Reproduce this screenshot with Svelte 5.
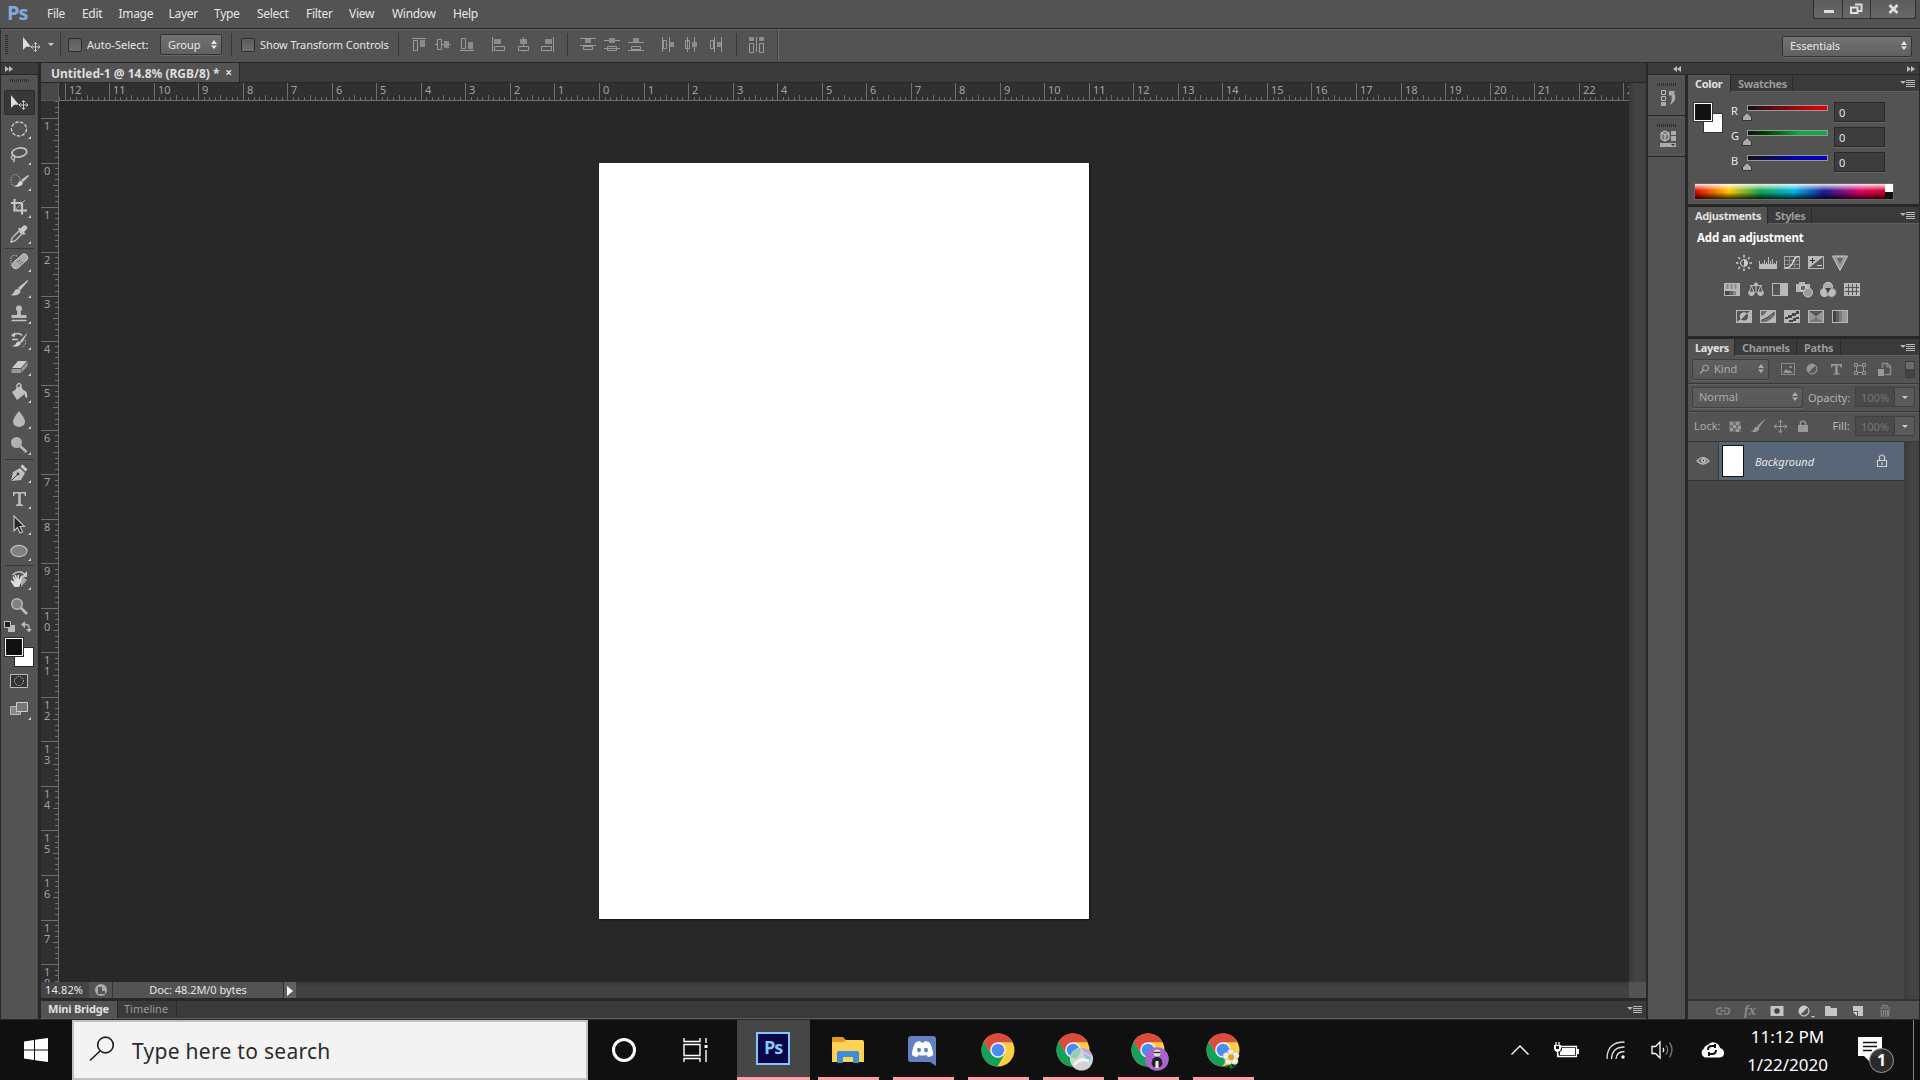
<script lang="ts">
  interface MenuItem {
    label: string;
    width: number;
  }

  const menus: MenuItem[] = [
    { label: "File", width: 35 },
    { label: "Edit", width: 36.5 },
    { label: "Image", width: 50 },
    { label: "Layer", width: 45.500 },
    { label: "Type", width: 43 },
    { label: "Select", width: 49 },
    { label: "Filter", width: 43 },
    { label: "View", width: 43 },
    { label: "Window", width: 61 },
    { label: "Help", width: 40 },
  ];

  const alignGroups = [
    ["alignTop", "alignMiddle", "alignBottom"],
    ["alignLeft", "alignCenter", "alignRight"],
  ];
  const distributeGroups = [
    ["distTop", "distMiddle", "distBottom"],
    ["distLeft", "distCenter", "distRight"],
  ];

  const toolGroups = [
    ["move", "marquee", "lasso", "quickSelect", "crop", "eyedropper"],
    ["healing", "brush", "stamp", "history", "eraser", "bucket", "blur", "dodge"],
    ["pen", "type", "path", "ellipse"],
    ["hand", "zoom"],
  ];

  const sliders = [
    { name: "R", value: 0 },
    { name: "G", value: 0 },
    { name: "B", value: 0 },
  ];

  const adjustments = [
    ["brightness", "levels", "curves", "exposure", "vibrance"],
    ["hue", "balance", "bw", "photo", "mixer", "lookup"],
    ["invert", "posterize", "threshold", "selective", "gradmap"],
  ];

  // inches to screen pixels at the current zoom
  const unit = 44.53;
  const hOrigin = 540.5;
  const vOrigin = 62;

  function ticks(origin: number, length: number) {
    const list: { pos: number; kind: number; label: number }[] = [];
    for (let i = -100; i < 200; i++) {
      const pos = Math.floor(origin + (i * unit) / 8) + 0.5;
      if (pos < 0 || pos > length) continue;
      const kind = i % 8 === 0 ? 2 : i % 4 === 0 ? 1 : 0;
      list.push({ pos, kind, label: Math.abs(i / 8) });
    }
    return list;
  }

  const hTicks = ticks(hOrigin, 1570);
  const vTicks = ticks(vOrigin, 881);

  const chrome =
    '<circle cx="17" cy="17" r="16.5" fill="#ffcd40"/><path d="M31.5 9.2A16.5 16.5 0 0 0 2.7 8.7L10.2 21L17 9.2Z" fill="#dd4b3e"/><path d="M2.7 8.7A16.5 16.5 0 0 0 16.5 33.5L23.8 21L10.2 21Z" fill="#12a05a"/><circle cx="17" cy="17" r="7.8" fill="#f5f5f5"/><circle cx="17" cy="17" r="6.3" fill="#4c8bf5"/>';

  const apps = [
    {
      name: "explorer",
      art: '<path d="M1 5q0-1 1-1h10l3 3h16q1 0 1 1v21H1Z" fill="#e09a1c"/><path d="M1 9h12l2-2h16q2 0 2 2v20H1Z" fill="#ffd157"/><path d="M6 30V20q0-2 2-2h18q2 0 2 2v10h-6v-6H12v6Z" fill="#3a8fd8"/>',
    },
    {
      name: "discord",
      art: '<path d="M5 3h22q3 0 3 3v27l-6-4H5q-3 0-3-3V6q0-3 3-3Z" fill="#6480c0"/><path d="M9.500 9.500q2.500-1.500 4.500-1.500l1 1.500h3L19 8q2 0 4.500 1.500Q27 15 27 22q-2 2-5 2l-1.500-2q-4 1-8 0L11 24q-3 0-5-2 0-7 3.500-12.500Z" fill="#fff"/><ellipse cx="13" cy="17" rx="2" ry="2.300" fill="#6480c0"/><ellipse cx="20" cy="17" rx="2" ry="2.300" fill="#6480c0"/>',
    },
    { name: "chrome", art: chrome },
    {
      name: "chrome-globe",
      art:
        chrome +
        '<circle cx="25.500" cy="26" r="11.500" fill="#d4d4d4"/><path d="M15 24q2-8 9-9l1 4-5 7Z" fill="#8fd0b8"/><path d="M25 15q9-1 11 8l-8-4Z" fill="#c9a0dd"/><path d="M27 20l8 4-1 5-5-4Z" fill="#8bc4dd"/><path d="M18 32q6-8 15-4" stroke="#f2f2f2" stroke-width="3" fill="none"/>',
    },
    {
      name: "chrome-person",
      art:
        chrome +
        '<circle cx="26" cy="26" r="11.800" fill="#aa63cf"/><path d="M20.500 31l1-5 3-2h3l3 2 1 5-2 3h-2v-4h-3v4h-2Z" fill="#222"/><circle cx="26" cy="20" r="3.600" fill="#ddd"/><path d="M22.500 19.500h7" stroke="#333" stroke-width="1.300"/><path d="M24.500 28h3v7h-3Z" fill="#e5e5e5"/>',
    },
    {
      name: "chrome-flower",
      art:
        chrome +
        '<path d="M19 34l4-2 2 3 5-3M25 28v7" stroke="#15741f" stroke-width="2" fill="none" stroke-dasharray="3 1"/><g fill="#f3eee4" stroke="#b9a88a" stroke-width=".5"><circle cx="25" cy="19.500" r="3.600"/><circle cx="29.500" cy="22.500" r="3.600"/><circle cx="28.500" cy="28" r="3.600"/><circle cx="22.500" cy="28" r="3.600"/><circle cx="20.500" cy="23" r="3.600"/></g><circle cx="25" cy="24.300" r="3" fill="#e0a326"/>',
    },
  ];

  const solid = (d: string) => `<path d="${d}" fill="#8b8b8b"/>`;
  const line = (d: string) => `<path d="${d}" fill="none" stroke="#9a9a9a"/>`;
  const frame = '<rect x="0" y="1" width="16" height="13" fill="#b8b8b8"/>';

  const icons: Record<string, string> = {
    alignTop: line("M1 2.5h14M2.5 4.5h4v10h-4z") + solid("M9 4h5v7h-5z"),
    alignMiddle: line("M0 8.5h3M7 8.5h9M2.5 3.5h4v10h-4z") + solid("M9 5h5v7h-5z"),
    alignBottom: line("M1 14.5h14M2.5 2.5h4v10h-4z") + solid("M9 6h5v7h-5z"),
    alignLeft: line("M1.5 1v15M3.5 10.5h10v4h-10z") + solid("M3 3h7v5h-7z"),
    alignCenter: line("M8.5 1v2M8.5 7v3M8.5 14v2M3.5 10.5h10v4h-10z") + solid("M5 3h7v5h-7z"),
    alignRight: line("M14.5 1v15M2.5 10.5h10v4h-10z") + solid("M6 3h7v5h-7z"),
    distTop: line("M0 2.5h16M0 9.5h16M3.5 10.5h9v3h-9z") + solid("M5 3h6v4h-6z"),
    distMiddle: line("M0 4.5h16M0 12.5h16M3.5 10.5h9v4h-9z") + solid("M5 2h6v5h-6z"),
    distBottom: line("M0 6.5h16M0 14.5h16M3.5 10.5h9v3h-9z") + solid("M5 2h6v4h-6z"),
    distLeft: line("M2.5 1v15M9.5 1v15M3.5 4.5h3v8h-3z") + solid("M10 6h4v5h-4z"),
    distCenter: line("M3.5 1v15M10.5 1v15M1.5 4.5h4v8h-4z") + solid("M8 6h5v5h-5z"),
    distRight: line("M6.5 1v15M13.5 1v15M2.5 4.5h3v8h-3z") + solid("M9 6h4v5h-4z"),
    autoAlign: line("M1.5 7.5h4v9h-4zM8.5 1v15M11.5 7.5h4v9h-4z") + solid("M1 1h5v4h-5zM11 1h5v4h-5z"),

    move: '<path d="M2 2v13l3.200-3.200H10Z" fill="#ddd"/><path d="M14.500 7.500v9M10 12h9M12.800 9.200l1.700-1.700 1.700 1.700M12.800 14.800l1.700 1.700 1.700-1.700M11.700 10.300L10 12l1.700 1.700M17.300 10.300L19 12l-1.700 1.700" stroke="#c8c8c8" fill="none"/>',
    marquee: '<ellipse cx="10" cy="10" rx="7.500" ry="7" fill="none" stroke="#d0d0d0" stroke-width="1.300" stroke-dasharray="3.600 1.400"/>',
    lasso: '<ellipse cx="10.500" cy="7.500" rx="7.500" ry="4.500" transform="rotate(-10 10 8)" fill="none" stroke="#c4c4c4" stroke-width="1.700"/><path d="M4 10q-3 2-1 4 3 1 3-2t-3-1M5 14q1 2-1 3" fill="none" stroke="#c4c4c4" stroke-width="1.200"/>',
    quickSelect: '<ellipse cx="6.500" cy="9.500" rx="4.500" ry="6" fill="none" stroke="#d0d0d0" stroke-dasharray="1 1.300"/><path d="M19 4l-7 5 2 2 6-6Z" fill="#c8c8c8"/><path d="M12 10q3 1 1 4-4 3-8 1 4-1 4-3 1-2 3-2Z" fill="#d8d8d8"/>',
    crop: '<path d="M5.500 2v11.500H18M2 6h11v11.500" fill="none" stroke="#c6c6c6" stroke-width="2.200"/><path d="M6 13L16 3" stroke="#aaa"/>',
    eyedropper: '<path d="M2 18l1-4 7-7 3 3-7 7Z" fill="#555" stroke="#c8c8c8" stroke-width="1.300"/><path d="M9 5l6 6 1.500-1.500-1.500-1.500 3-3q1-2-1-3.500-2-1-3.500 1l-2 2-1-1Z" fill="#c8c8c8"/>',
    healing: '<path d="M8 4q-6-2-6 3v6q1 4 5 2" fill="none" stroke="#ddd" stroke-dasharray="1 1.300"/><rect x="2.500" y="6" width="18" height="7" rx="3.500" transform="rotate(-42 11 10)" fill="#aaa" stroke="#c5c5c5"/><path d="M8 9l5 4M10 8l4 3" stroke="#444" stroke-dasharray="1 1"/>',
    brush: '<path d="M18.500 2L9 10l2.300 2.300L19 3Z" fill="#c8c8c8"/><path d="M8.500 11q3 0 3 3-3 5-10 3 3-1 3.500-3 1-3 3.500-3Z" fill="#c4c4c4"/>',
    stamp: '<circle cx="10" cy="4.500" r="3" fill="#bdbdbd"/><path d="M8.500 6h3l.5 5h5.500v3h-15v-3H8Z" fill="#bdbdbd"/><path d="M2.500 16.500h15" stroke="#c5c5c5" stroke-width="1.500"/>',
    history: '<path d="M18 3l-7 8 2 2 5-9Z" fill="#c4c4c4"/><path d="M10 11q3 1 1 4-4 3-8 1 4-1 4-3Z" fill="#d0d0d0"/><path d="M3 5.500q7-4 10 0M3 9.500h6" fill="none" stroke="#c8c8c8" stroke-width="1.600"/><path d="M2 6l4-4v5Z" fill="#c8c8c8"/><path d="M16 10q2 6-4 7" fill="none" stroke="#ddd" stroke-dasharray="1 1.300"/>',
    eraser: '<path d="M9 5h9l-6 7H3Z" fill="#ccc"/><path d="M2.500 13H12v4H2.500ZM12.500 12.500L18.500 6v4l-6 6.500Z" fill="#999"/>',
    bucket: '<path d="M3 10l8-6 6 7-9 7Z" fill="#bfbfbf"/><path d="M8 7V3q2-3 4 0v5" fill="none" stroke="#ccc" stroke-width="1.300"/><path d="M14 8q5 1 4 8-3-1-2-5Z" fill="#ccc"/>',
    blur: '<path d="M10 2q6 7 6 11a6 5 0 0 1-12 0Q4 9 10 2Z" fill="#b8b8b8"/>',
    dodge: '<circle cx="7.500" cy="7.500" r="5.500" fill="#b0b0b0"/><path d="M11 11l6.500 6" stroke="#b8b8b8" stroke-width="2.500"/>',
    pen: '<path d="M2 18l2-9 7-4 5 5-4 7Z" fill="#c0c0c0"/><path d="M2.500 17.500l6-6" stroke="#444"/><circle cx="9" cy="11" r="1.400" fill="#444"/><path d="M11.500 3.500l2-2 5 5-2 2Z" fill="#cfcfcf"/>',
    type: '<path d="M4 3h13v4h-1.200L15 4.600h-3.200V15l2.200.7V17H7v-1.300l2.200-.7V4.600H6L5.200 7H4Z" fill="#bdbdbd"/>',
    path: '<path d="M5 1v15l3.500-3.500L11 18l2.600-1.200L11 11.500h4.500Z" fill="#252525" stroke="#c8c8c8" stroke-width="1.100"/>',
    ellipse: '<ellipse cx="10" cy="10" rx="8" ry="5.700" fill="#808080" stroke="#bfbfbf" stroke-width="1.200"/>',
    hand: '<path d="M12 6l6 5-6 7Z" fill="#a8a8a8"/><path d="M3.500 6q6-6 12-1" fill="none" stroke="#c8c8c8" stroke-width="1.600"/><path d="M18 2v6h-6Z" fill="#c8c8c8"/><path d="M5.500 18l-4-6 1-1 3 2-2-5 1-1 2 4-1-5H7l1.500 4V6H10v5l2-4 1 .5-1 6-2 4.500Z" fill="#ddd"/>',
    zoom: '<circle cx="8" cy="8" r="5.300" fill="#808080" stroke="#b5b5b5" stroke-width="1.500"/><path d="M12 12l6 6" stroke="#bbb" stroke-width="2.800"/>',

    brightness: '<circle cx="8" cy="8" r="3.500" fill="#555" stroke="#ccc"/><path d="M8 4.500a3.500 3.500 0 0 1 0 7Z" fill="#ccc"/><path d="M8 0v2.500M8 13.500V16M0 8h2.500M13.500 8H16M2.300 2.300L4 4M12 12l1.700 1.700M13.700 2.300L12 4M4 12l-1.700 1.700" stroke="#ccc" stroke-width="1.600"/>',
    levels: '<path d="M-1 9h18v5H-1Z" fill="#bdbdbd"/><path d="M-.5 6v4M2.500 8v2M4.500 5v5M6.500 7v3M8.500 2v8M10.500 6v4M12.500 4v6M14.500 8v2M16.500 6v4" stroke="#bdbdbd"/>',
    curves: '<rect x=".500" y="1.500" width="15" height="12" fill="#555" stroke="#aaa"/><path d="M5.500 2v12M10.500 2v12M1 5.500h14M1 9.500h14" stroke="#888"/><path d="M1 13q6 0 8-6t6-5" fill="none" stroke="#ddd" stroke-width="1.300"/>',
    exposure: frame + '<path d="M1 13L15 2v11Z" fill="#555"/><path d="M2 5.500h5M4.500 3v5" stroke="#333"/><path d="M9 10.500h5" stroke="#ccc"/>',
    vibrance: '<path d="M.5 1h15L8 15.500Z" fill="#999" stroke="#c8c8c8"/><path d="M5 3h6l-3 6Z" fill="#666"/>',
    hue: frame + '<path d="M3.500 2v5M7.500 2v5M11.500 2v5" stroke="#888" stroke-width="2"/><path d="M1 9h4v4H1Z" fill="#444"/><path d="M5 9h4v4H5Z" fill="#606060"/><path d="M9 9h3v4H9Z" fill="#868686"/>',
    balance: '<path d="M2 3.500h12M8 1v10M3.500 4L1 10h5L3.500 4M12.500 4L10 10h5Z" fill="none" stroke="#bbb"/><path d="M0 10h7q-.5 4-3.500 4T0 10M9 10h7q-.5 4-3.500 4T9 10" fill="#bbb"/><circle cx="8" cy="2.500" r="2" fill="#bbb"/>',
    bw: frame + '<path d="M1 2h7v11H1Z" fill="#555"/>',
    photo: '<path d="M0 2h3V0h6v2h5v8H0Z" fill="#b5b5b5"/><circle cx="7" cy="6" r="3" fill="#666" stroke="#ddd"/><circle cx="12" cy="10.500" r="4.500" fill="#999" stroke="#ccc"/>',
    mixer: '<circle cx="8" cy="4.800" r="4.500" fill="#aaa" stroke="#ccc"/><circle cx="4.500" cy="10.500" r="4.500" fill="#bdbdbd"/><circle cx="11.500" cy="10.500" r="4.500" fill="#bdbdbd" stroke="#888"/><path d="M5 6h6l-3 5Z" fill="#444"/>',
    lookup: frame + '<path d="M4.500 2v11M8.500 2v11M12.500 2v11M1 5.500h14M1 9.500h14" stroke="#555"/>',
    invert: frame + '<path d="M1 2h13L1 13Z" fill="#555"/><circle cx="8" cy="7.500" r="4" fill="#555"/><path d="M11 4.500L5 10.500a4 4 0 0 1 6-6" fill="#bbb"/>',
    posterize: frame + '<path d="M1 2h6q-2 4-6 5ZM1 12q7-3 14-9v3Q10 12 5 13H1Z" fill="#6c6c6c"/><path d="M1 11.500Q8 9 14.500 3" stroke="#444" fill="none"/>',
    threshold: frame + '<path d="M1 8h3V6h4V4h4V2h3v3h-3v2H8v2H4v1H1ZM5 13v-2h4V9h3V8h3v2h-3v2H9v1Z" fill="#444"/>',
    selective: frame + '<path d="M1 2l7 5.500L1 13ZM15 2L8 7.500l7 5.500Z" fill="#999"/><path d="M1 13l7-5.500 7 5.500Z" fill="#777"/><path d="M1 2l7 5.500L15 2" fill="#555"/>',
    gradmap: frame + '<path d="M1 2h3v11H1Z" fill="#444"/><path d="M4 2h3v11H4Z" fill="#606060"/><path d="M7 2h3v11H7Z" fill="#7d7d7d"/><path d="M10 2h5v11h-5Z" fill="#989898"/>',

    image: '<rect x="1.500" y="2.500" width="13" height="11" fill="none" stroke="#888"/><path d="M3 12l3-4 2 2 1-1 4 3Z" fill="#999"/><path d="M9 5h3v2H9Z" fill="#888"/>',
    adjust: '<circle cx="8" cy="8" r="5" fill="#969696"/><path d="M11.500 4.500a5 5 0 0 1-7 7Z" fill="#555"/><circle cx="8" cy="8" r="5" fill="none" stroke="#999"/>',
    newAdjust: '<circle cx="8" cy="8" r="5" fill="#ccc"/><path d="M11.500 4.500a5 5 0 0 1-7 7Z" fill="#555"/><circle cx="8" cy="8" r="5" fill="none" stroke="#ccc"/><path d="M15 13h4l-2 2Z" fill="#ccc"/>',
    text: '<path d="M3 3h11v3.500h-1L12 4.500H9.700V12l1.800.5v1H5.500v-1l1.800-.5V4.500H5L4 6.500H3Z" fill="#999"/>',
    shape: '<path d="M4 4.500h8M4 11.500h8M4.500 4v8M11.500 4v8" stroke="#999" fill="none"/><path d="M2.500 2.500h3v3h-3ZM10.500 2.500h3v3h-3ZM2.500 10.500h3v3h-3ZM10.500 10.500h3v3h-3Z" fill="#555" stroke="#999"/>',
    smart: '<path d="M6.500 7V2.500h5l3 3v8H9" fill="none" stroke="#888" stroke-width="1.500"/><path d="M2 8h6v7H2Z" fill="#999"/><path d="M11 2v4h4" stroke="#999" fill="none"/>',
    pixels: '<path d="M2 3h12v11H2Z" fill="#6f6f6f"/><path d="M3 4h3v3H3ZM9 4h3v3H9ZM6 7h3v3H6ZM3 10h3v3H3ZM11 8h3v3h-3ZM9 11h3v3H9Z" fill="#999"/>',
    moveLock: '<path d="M8.500 2v12M2 8.500h13M6.500 4.500l2-2.500 2 2.500M6.500 12.500l2 2.500 2-2.500M4.500 6.500L2 8.500l2.500 2M12.500 6.500l2.500 2-2.500 2" stroke="#999" fill="none"/>',
    lock: '<path d="M3 7h10v7H3Z" fill="#999"/><path d="M5.500 7V4.500q2.500-3 5 0V7" stroke="#999" stroke-width="1.500" fill="none"/>',
    layerLock: '<path d="M3.500 7.500h9v6h-9ZM5.500 7V3.500q2.500-3 5 0V7M8 9v3" stroke="#d0d0d0" stroke-width="1.200" fill="none"/>',
    eye: '<path d="M2 8q6-7 12 0-6 6-12 0Z" fill="#666" stroke="#bbb" stroke-width="1.200"/><circle cx="8.500" cy="7.500" r="2.300" fill="#ddd"/><circle cx="8.500" cy="7.500" r="1" fill="#333"/>',
    link: '<path d="M7 5H4.500a3 3 0 0 0 0 6H7M9 5h2.500a3 3 0 0 1 0 6H9M5 8h6" stroke="#999" stroke-width="1.500" fill="none"/>',
    mask: '<path d="M1.500 3h13v10h-13Z" fill="#c5c5c5"/><circle cx="8" cy="8" r="2.800" fill="#444"/>',
    folder: '<path d="M2 3h5l1 2h6v8H2Z" fill="#c5c5c5"/>',
    newLayer: '<path d="M3 3h10v10H8V8H3Z" fill="#c5c5c5"/><path d="M3 9l4 4V9Z" fill="#ddd"/>',
    trash: '<path d="M2.500 5h11M6 4V2.500h4V4M4 6.500l.5 6.500h7l.5-6.500M6.500 7v5M8.500 7v5M10.500 7v5" stroke="#888" stroke-width="1.200" fill="none"/>',
  };
</script>

{#snippet icon(name: string, size = 16)}
  <svg class="icon" width={size} height={size} viewBox={`0 0 ${size} ${size}`}>
    {@html icons[name]}
  </svg>
{/snippet}

{#snippet updown()}
  <svg class="icon" width="6" height="9" viewBox="0 0 6 9">
    <path d="M0 4L3 0L6 4ZM0 5.500L3 9L6 5.500Z" fill="currentColor" />
  </svg>
{/snippet}

{#snippet panelMenu()}
  <svg class="icon panel-menu" width="15" height="9" viewBox="0 0 15 9">
    <path d="M0 2h6L3 5Z" fill="#b5b5b5" />
    <path d="M6 1.500h9M6 3.500h9M6 5.500h9M6 7.500h9" stroke="#bbb" />
  </svg>
{/snippet}

{#snippet arrows(left: boolean)}
  <svg class="icon" class:flip={left} width="8" height="6" viewBox="0 0 8 6">
    <path d="M0 0L4 3L0 6ZM4 0L8 3L4 6Z" fill="#bbb" />
  </svg>
{/snippet}

<div class="screen">
  <header class="menubar">
    <span class="logo">Ps</span>
    <nav>
      {#each menus as menu}
        <span style:width="{menu.width}px">{menu.label}</span>
      {/each}
    </nav>
    <div class="window-buttons">
      <span><svg width="28" height="18"><path d="M10 10h10v3H10Z" fill="#ddd" /></svg></span>
      <span>
        <svg width="27" height="18"><path d="M12 4.500h6.500V11H15M8 7.500h6.500V13H8Z" fill="none" stroke="#ddd" stroke-width="2" /></svg>
      </span>
      <span>
        <svg width="46" height="18"><path d="M18.500 5l8 8M26.500 5l-8 8" stroke="#ddd" stroke-width="2.700" /></svg>
      </span>
    </div>
  </header>

  <div class="options">
    <i class="vgrip"></i>
    <div class="current-tool">{@render icon("move", 20)}<b class="caret"></b></div>
    <i class="vsep"></i>
    <label class="check auto"><i></i>Auto-Select:</label>
    <div class="select group">Group{@render updown()}</div>
    <i class="vsep"></i>
    <label class="check transform"><i></i>Show Transform Controls</label>
    <i class="vsep"></i>
    {#each alignGroups as group}
      <div class="align">{#each group as name}<span>{@render icon(name, 17)}</span>{/each}</div>
    {/each}
    <i class="vsep"></i>
    {#each distributeGroups as group}
      <div class="align">{#each group as name}<span>{@render icon(name, 17)}</span>{/each}</div>
    {/each}
    <i class="vsep"></i>
    <div class="align single"><span>{@render icon("autoAlign", 17)}</span></div>
    <i class="vsep tall"></i>
    <div class="select essentials">Essentials{@render updown()}</div>
  </div>

  <main class="workspace">
    <aside class="toolbar">
      <div class="collapse">{@render arrows(false)}</div>
      <div class="tools">
        <i class="hgrip"></i>
        {#each toolGroups as group, g}
          {#if g > 0}<hr />{/if}
          {#each group as tool}
            <div class="tool" class:active={tool === "move"}>
              {@render icon(tool, 20)}
              {#if tool !== "move" && tool !== "zoom"}<i class="corner"></i>{/if}
            </div>
          {/each}
        {/each}
        <div class="swap">
          <svg width="12" height="12"><path d="M4 4h7v7H4Z" fill="#bbb" /><path d="M.5.5h6v6h-6Z" fill="#222" stroke="#bbb" /></svg>
          <svg width="12" height="12"><path d="M2 3.500h3q3 0 3 3V9" fill="none" stroke="#bbb" stroke-width="1.300" /><path d="M4 0v7L0 3.500ZM5 8h6l-3 3.500Z" fill="#bbb" /></svg>
        </div>
        <div class="swatches"><i class="back"></i><i class="front"></i></div>
        <div class="mode">
          <svg width="18" height="14"><path d="M.5.5h17v13H.5Z" fill="#333" stroke="#bbb" /><circle cx="9" cy="7" r="4.500" fill="none" stroke="#ddd" stroke-dasharray="1 1.200" /></svg>
        </div>
        <div class="mode screenmode">
          <svg width="18" height="14"><path d="M.5 4.500h10v8H.5Z" fill="#888" stroke="#bbb" /><path d="M6.500.5h11v9h-11Z" fill="#777" stroke="#ccc" /></svg>
          <i class="corner"></i>
        </div>
      </div>
    </aside>

    <section class="document">
      <div class="doc-tabs"><div class="doc-tab">Untitled-1 @ 14.8% (RGB/8) * <span>×</span></div></div>
      <div class="viewport">
        <div class="ruler-corner"></div>
        <svg class="ruler hruler" width="1570" height="18">
          {#each hTicks as t}
            <path d={`M${t.pos} ${[14, 12, 0][t.kind]}V17`} />
            {#if t.kind === 2}<text x={t.pos + 3.5} y="11">{t.label}</text>{/if}
          {/each}
          <path d="M0 17.500H1570" />
        </svg>
        <svg class="ruler vruler" width="18" height="881">
          {#each vTicks as t}
            <path d={`M${[14, 12, 0][t.kind]} ${t.pos}H17`} />
            {#if t.kind === 2}
              {#each String(t.label) as digit, d}<text x="3" y={t.pos + 11.5 + d * 11}>{digit}</text>{/each}
            {/if}
          {/each}
          <path d="M17.500 0V881" />
        </svg>
        <div class="canvas"><div class="page"></div></div>
        <div class="vscroll"></div>
      </div>
      <div class="status">
        <span class="percent">14.82%</span>
        <span class="share"><svg width="14" height="14"><circle cx="7" cy="7" r="6" fill="#aaa" /><path d="M4 4v7h7V8H8V4Z" fill="#555" /></svg></span>
        <span class="doc-size">Doc: 48.2M/0 bytes</span>
        <span class="play"><svg width="7" height="10"><path d="M1 0v10l6-5Z" fill="#fff" /></svg></span>
        <i class="scroll-corner"></i>
      </div>
      <div class="bottom-tabs tabs"><span class="on bridge">Mini Bridge</span><span class="timeline">Timeline</span>{@render panelMenu()}</div>
    </section>

    <aside class="dock">
      <div class="collapse right">{@render arrows(true)}</div>
      <div class="dock-item">
        <i class="hgrip"></i>
        <svg width="16" height="18"><path d="M1.500 1.500h4v4h-4ZM1.500 7.500h4v4h-4Z" fill="none" stroke="#bbb" /><path d="M1 13h5v4H1Z" fill="#aaa" /><path d="M9 2h6l-1 2q4 7-4 12 3-7 1-10l-2 1Z" fill="#aaa" /></svg>
      </div>
      <div class="dock-item">
        <i class="hgrip"></i>
        <svg width="16" height="18"><path d="M5 1l4 2v6l-4 2-4-2V3Z" fill="#777" stroke="#ccc" /><path d="M1 3l4 2 4-2M5 5v6" fill="none" stroke="#ccc" /><path d="M11 1h5v4h-5ZM11 6h5v5h-5ZM0 13h16v4H0Z" fill="#aaa" /><path d="M11 14h4l-2 2Z" fill="#333" /></svg>
      </div>
      <div class="dock-rest"></div>
    </aside>

    <aside class="panels">
      <div class="collapse right">{@render arrows(false)}</div>
      <section class="panel color">
        <div class="tabs"><span class="on" style:width="43px">Color</span><span style:width="62px">Swatches</span>{@render panelMenu()}</div>
        <div class="color-body">
          <div class="color-chips"><i class="back"></i><i class="front"></i></div>
          <div class="sliders">
            {#each sliders as s}
              <div class="slider">
                <span>{s.name}</span>
                <div class="track"><i class={`bar ${s.name}`}></i><svg width="10" height="10"><path d="M5 .5L9.500 5v3.500h-9V5Z" fill="#aaa" stroke="#333" /></svg></div>
                <output>{s.value}</output>
              </div>
            {/each}
          </div>
        </div>
        <div class="spectrum"><i></i></div>
      </section>

      <section class="panel adjust">
        <div class="tabs"><span class="on" style:width="80px">Adjustments</span><span style:width="44px">Styles</span>{@render panelMenu()}</div>
        <h2>Add an adjustment</h2>
        {#each adjustments as row}
          <div class="adjust-row">{#each row as name}{@render icon(name, 16)}{/each}</div>
        {/each}
      </section>

      <section class="panel layers">
        <div class="tabs"><span class="on" style:width="47px">Layers</span><span style:width="62px">Channels</span><span style:width="44px">Paths</span>{@render panelMenu()}</div>
        <div class="filter-row">
          <div class="select kind">
            <svg width="11" height="10"><circle cx="6.500" cy="4" r="3" fill="none" stroke="#aaa" /><path d="M4.500 6L1 9.500" stroke="#aaa" stroke-width="1.300" /></svg>
            <span>Kind</span>{@render updown()}
          </div>
          <div class="filters">{#each ["image", "adjust", "text", "shape", "smart"] as name}{@render icon(name)}{/each}</div>
          <i class="toggle"></i>
        </div>
        <div class="blend-row">
          <div class="select blend">Normal{@render updown()}</div>
          <span class="field-label">Opacity:</span>
          <div class="percent-field"><span>100%</span><b><i class="caret"></i></b></div>
        </div>
        <div class="lock-row">
          <span class="lock-label">Lock:</span>
          <div class="locks">
            {@render icon("pixels")}
            <svg width="16" height="16" viewBox="0 0 20 20"><path d="M20 0L9 10l2.300 2.300ZM8.500 11q3 0 3 3-3 5-11 3 4-1 4.500-3 1-3 3.500-3Z" fill="#999" /></svg>
            {@render icon("moveLock")}
            {@render icon("lock")}
          </div>
          <span class="field-label">Fill:</span>
          <div class="percent-field"><span>100%</span><b><i class="caret"></i></b></div>
        </div>
        <div class="list">
          <div class="layer">
            <div class="visibility">{@render icon("eye")}</div>
            <div class="layer-main"><i class="thumb"></i><em>Background</em>{@render icon("layerLock")}</div>
          </div>
          <div class="list-scroll"></div>
        </div>
        <footer>
          <span class="dim">{@render icon("link")}</span>
          <span class="fx">fx</span>
          <span>{@render icon("mask")}</span>
          <span>{@render icon("newAdjust")}</span>
          <span>{@render icon("folder")}</span>
          <span>{@render icon("newLayer")}</span>
          <span>{@render icon("trash")}</span>
        </footer>
      </section>
    </aside>
  </main>

  <div class="taskbar">
    <div class="start">
      <svg width="24" height="24"><path d="M0 3.500L10 2v9.500H0ZM11 1.800L24 0v11.500H11ZM0 12.500h10V22L0 20.500ZM11 12.500h13V24l-13-1.800Z" fill="#fff" /></svg>
    </div>
    <div class="search">
      <svg width="26" height="26"><circle cx="16.500" cy="9" r="7.800" fill="none" stroke="#222" stroke-width="1.700" /><path d="M11 15L1 24.500" stroke="#222" stroke-width="1.700" /></svg>
      <span>Type here to search</span>
    </div>
    <div class="cortana"><i></i></div>
    <div class="taskview">
      <svg width="26" height="24"><path d="M1 0v3.500h16V0M1 24v-3.500h16V24M1 6.500h16v11H1ZM23 0v5M23 12v12" fill="none" stroke="#fff" stroke-width="1.400" /><path d="M21.500 7h3v3h-3Z" fill="#fff" /></svg>
    </div>
    <div class="app ps"><span>Ps</span></div>
    {#each apps as app (app.name)}
      <div class="app"><svg width="40" height="40" viewBox="0 0 40 40">{@html app.art}</svg></div>
    {/each}
    <div class="tray">
      <svg width="18" height="12"><path d="M.5 10.500L9 2l8.500 8.500" fill="none" stroke="#fff" stroke-width="1.400" /></svg>
      <svg width="26" height="18"><path d="M6 5.500h16.500v10H4V12" fill="none" stroke="#fff" stroke-width="1.300" /><path d="M8 7h13v7H6v-3l2-2ZM23 8h2v5h-2ZM0 4h7v4q-1 3-3.500 3T0 8Z" fill="#fff" /><path d="M2 1v3M5 1v3M3.500 10v6" stroke="#fff" stroke-width="1.200" /><path d="M2 5h3v3H2Z" fill="#101010" /></svg>
      <svg width="20" height="20"><g fill="none" stroke="#ddd" stroke-width="1.300"><path d="M1 19Q1 2 18.500 2M5.500 19Q6 7 18.500 7M10 19Q10.500 11.500 18.500 11.500" /></g><circle cx="17" cy="17" r="1.700" fill="#fff" /></svg>
      <svg width="24" height="20"><path d="M1 6.500h3.500L9 2v16l-4.500-4.500H1Z" fill="none" stroke="#fff" stroke-width="1.300" /><path d="M12 8q1.500 2 0 4" fill="none" stroke="#fff" stroke-width="1.300" /><path d="M15 5.500q3.500 4.500 0 9M18.500 2.500q5 7 0 15" fill="none" stroke="#777" stroke-width="1.300" /></svg>
      <svg width="24" height="16"><path d="M5 15.500a5 5 0 0 1-1-9Q5 3 8 3q3-4 8-2 3 1 4 5 4 1 4 5t-4 4.500Z" fill="#fff" /><path d="M8 8q0-4 4-4h3M15 2v4M16 8q0 4-4 4H9M9 10v4" fill="none" stroke="#101010" stroke-width="2" /></svg>
    </div>
    <div class="clock"><span>11:12 PM</span><span>1/22/2020</span></div>
    <div class="notify">
      <svg width="24" height="26"><path d="M0 0h24v19H12v6l-6-6H0Z" fill="#fff" /><path d="M5 5.500h14M5 9.500h14M5 13.500h9" stroke="#101010" stroke-width="1.300" /></svg>
      <b>1</b>
    </div>
    <i class="peek"></i>
  </div>
</div>

<style>
  :global(body) {
    margin: 0;
    overflow: hidden;
    background: #282828;
  }
  .screen,
  .screen * {
    box-sizing: border-box;
  }
  .screen {
    display: flex;
    flex-direction: column;
    width: 1920px;
    height: 1080px;
    color: #e6e6e6;
    background: #282828;
    font: 11px/1 "Noto Sans", "Open Sans", sans-serif;
    overflow: hidden;
    white-space: nowrap;
  }
  svg {
    display: block;
    flex: none;
  }
  .flip {
    transform: scaleX(-1);
  }
  .caret {
    width: 0;
    height: 0;
    border: 3px solid transparent;
    border-top-color: #ccc;
    border-bottom: 0;
  }

  .menubar {
    display: flex;
    height: 29px;
    background: #535353;
    border-bottom: 1px solid #282828;
  }
  .logo {
    width: 47px;
    padding-left: 7px;
    color: #82a8e0;
    font: bold 20px/25px "Open Sans", sans-serif;
    letter-spacing: -1px;
  }
  nav {
    display: flex;
    flex: 1;
    font-size: 12px;
    line-height: 28px;
    letter-spacing: -0.3px;
  }
  .window-buttons {
    display: flex;
    width: 103px;
    height: 19px;
    margin-right: 4px;
    border: 1px solid #303030;
    border-top: 0;
    border-radius: 0 0 3px 3px;
    background: linear-gradient(#5c5c5c, #696969);
  }
  .window-buttons span + span {
    border-left: 1px solid #303030;
  }

  .options {
    display: flex;
    align-items: center;
    height: 34px;
    padding: 0 8px 3px 0;
    border-top: 1px solid #646464;
    border-bottom: 1px solid #282828;
    border-left: 1px solid #303030;
    background: #535353;
    letter-spacing: -0.08px;
  }
  .vgrip {
    width: 3px;
    height: 20px;
    margin-left: 4px;
    background: repeating-linear-gradient(#303030 0 1px, transparent 1px 2px);
  }
  .current-tool {
    display: flex;
    align-items: center;
    gap: 7px;
    width: 52px;
    padding-left: 13px;
  }
  .vsep {
    width: 1px;
    height: 23px;
    background: #383838;
  }
  .vsep.tall {
    width: 2px;
    height: 30px;
    border-left: 1px solid #3c3c3c;
    background: #707070;
  }
  .check {
    display: flex;
    align-items: center;
    gap: 5px;
  }
  .check i {
    width: 14px;
    height: 14px;
    border: 1px solid #2c2c2c;
    border-radius: 2px;
    background: linear-gradient(#5c5c5c, #6d6d6d);
  }
  .auto {
    width: 99px;
    padding-left: 7px;
    letter-spacing: 0;
  }
  .transform {
    width: 166px;
    padding-left: 9px;
  }
  .select {
    display: flex;
    align-items: center;
    justify-content: space-between;
    border: 1px solid #333;
    border-radius: 2px;
    background: linear-gradient(#727272, #606060);
    box-shadow: 0 1px #686868;
  }
  .group {
    width: 62px;
    height: 21px;
    margin-right: 9px;
    padding: 0 4px 1px 7px;
    letter-spacing: 0;
  }
  .essentials {
    width: 130px;
    height: 21px;
    margin-top: 3px;
    margin-left: auto;
    padding: 0 4px 1px 7px;
  }
  .align {
    display: flex;
    margin-left: 8px;
  }
  .align span {
    display: flex;
    justify-content: center;
    width: 24px;
  }
  .align + .vsep {
    margin-left: 8px;
  }
  .align.single {
    margin-left: 7px;
  }
  .single + .tall {
    margin-left: 9px;
  }

  .workspace {
    display: flex;
    height: 957px;
  }
  .collapse {
    display: flex;
    flex: none;
    align-items: center;
    height: 12px;
    padding: 0 4px;
    border-bottom: 1px solid #282828;
    background: #3b3b3b;
  }
  .collapse.right {
    justify-content: flex-end;
  }
  .toolbar {
    display: flex;
    flex-direction: column;
    width: 41px;
    padding: 0 3px 1px 1px;
  }
  .tools {
    display: flex;
    flex: 1;
    flex-direction: column;
    background: #535353;
    border-right: 1px solid #484848;
  }
  .hgrip {
    flex: none;
    width: 19px;
    height: 3px;
    margin: 4px auto 8px 9px;
    background: repeating-linear-gradient(90deg, #303030 0 1px, transparent 1px 2px);
  }
  hr {
    width: 29px;
    height: 1px;
    margin: 1px 0 0 4px;
    border: 0;
    background: #383838;
  }
  .tool {
    position: relative;
    display: flex;
    align-items: center;
    height: 26.150px;
    padding-left: 8px;
  }
  .tool.active {
    width: 31px;
    height: 25px;
    margin: 0 0 1px 3px;
    padding-left: 4px;
    background: #383838;
    border: 1px solid #2c2c2c;
    border-radius: 2px;
  }
  .corner {
    position: absolute;
    right: 6px;
    bottom: 3px;
    border-left: 3px solid transparent;
    border-bottom: 3px solid #ccc;
  }
  .swap {
    display: flex;
    justify-content: space-between;
    height: 18px;
    padding: 2px 4px 0 3px;
  }
  .swatches {
    position: relative;
    height: 30px;
  }
  .swatches i {
    position: absolute;
    width: 20px;
    height: 20px;
    border: 1px solid #282828;
    background: #fff;
  }
  .swatches .back {
    top: 10px;
    left: 13px;
  }
  .swatches .front {
    top: 0;
    left: 3px;
    background: #111;
    box-shadow: inset 0 0 0 1px #fff;
  }
  .mode {
    position: relative;
    height: 28px;
    padding: 7px 0 0 9px;
  }

  .document {
    display: flex;
    flex-direction: column;
    width: 1605px;
  }
  .doc-tabs {
    height: 20px;
    background: #3a3a3a;
    border-bottom: 1px solid #282828;
  }
  .doc-tab {
    display: flex;
    justify-content: space-between;
    width: 199px;
    height: 19px;
    padding: 0 7px 0 10px;
    border-right: 1px solid #282828;
    background: #535353;
    color: #ddd;
    font-size: 12px;
    font-weight: bold;
    line-height: 21px;
    letter-spacing: -0.02px;
  }
  .doc-tab span {
    line-height: 19px;
  }
  .viewport {
    display: grid;
    grid-template: 18px 881px / 18px 1570px 17px;
  }
  .ruler-corner {
    background: #484848;
    border-right: 1px dotted #666;
    border-bottom: 1px dotted #666;
  }
  .ruler {
    background: #303030;
  }
  .ruler path {
    stroke: #6e6e6e;
  }
  .ruler text {
    fill: #a0a0a8;
    font-size: 11px;
  }
  .vruler {
    grid-area: 2 / 1;
  }
  .canvas {
    background: #282828;
    padding: 62px 0 0 540px;
  }
  .page {
    width: 490px;
    height: 756px;
    background: #fff;
    box-shadow: 1px 1px 2px #111;
  }
  .vscroll {
    grid-area: 1 / 3 / 3;
    background: linear-gradient(90deg, #383838, #434343 6px, #404040);
  }
  .status {
    display: flex;
    align-items: center;
    height: 16px;
    background: linear-gradient(#383838, #434343 6px, #404040);
    color: #e6e6e6;
    letter-spacing: -0.05px;
  }
  .status > * {
    display: flex;
    align-items: center;
    height: 16px;
    padding-bottom: 1px;
  }
  .percent {
    width: 48px;
    padding-left: 4px;
    background: #444;
    letter-spacing: 0.15px;
  }
  .share {
    justify-content: center;
    width: 24px;
    background: #535353;
    border-right: 1px solid #333;
  }
  .doc-size {
    justify-content: center;
    width: 170px;
    background: #535353;
  }
  .play {
    justify-content: center;
    width: 13px;
    padding: 1px 2px 0 0;
    border-left: 1px solid #2c2c2c;
    background: #606060;
  }
  .scroll-corner {
    width: 17px;
    margin-left: auto;
    background: #535353;
  }
  .tabs {
    display: flex;
    align-items: center;
    height: 17px;
    border-bottom: 1px solid #606060;
    background: #3a3a3a;
  }
  .tabs span {
    height: 16px;
    padding-left: 7px;
    border-right: 1px solid #2a2a2a;
    color: #999;
    font-weight: bold;
    line-height: 17px;
    letter-spacing: -0.35px;
  }
  .tabs .on {
    height: 17px;
    margin-bottom: -1px;
    background: #535353;
    color: #e0e0e0;
  }
  .tabs :global(.panel-menu) {
    margin: 0 4px 0 auto;
  }
  .bottom-tabs {
    height: 18px;
    margin-top: 3px;
    padding-bottom: 1px;
  }
  .bottom-tabs .bridge {
    width: 77px;
    line-height: 16px;
    letter-spacing: -0.2px;
  }
  .bottom-tabs .timeline {
    width: 59px;
    padding-left: 6px;
    font-weight: normal;
    line-height: 16px;
    letter-spacing: 0;
  }

  .dock {
    display: flex;
    flex-direction: column;
    width: 37px;
    margin-left: 2px;
    padding-bottom: 1px;
  }
  .dock-item {
    height: 40px;
    margin-bottom: 1px;
    background: #535353;
  }
  .dock-item svg {
    margin-left: 12px;
  }
  .dock-item .hgrip {
    display: block;
    margin-bottom: 7px;
    transform: translateY(4px);
  }
  .dock-rest {
    flex: 1;
    background: #535353;
  }

  .panels {
    display: flex;
    flex-direction: column;
    width: 235px;
    padding: 0 1px 1px 0;
  }
  .panels .panel {
    margin-left: 3px;
  }
  .panel {
    background: #535353;
    margin-bottom: 3px;
  }
  .color {
    height: 129px;
  }
  .color-body {
    display: flex;
    height: 91px;
    padding: 10px 0 0 5px;
  }
  .color-chips {
    position: relative;
    width: 38px;
  }
  .color-chips i {
    position: absolute;
    width: 20px;
    height: 20px;
    border: 1px solid #333;
    background: #fff;
  }
  .color-chips .back {
    top: 11px;
    left: 10px;
  }
  .color-chips .front {
    top: 0;
    left: 0;
    background: #111;
    box-shadow: inset 0 0 0 1px #fff;
  }
  .slider {
    display: flex;
    height: 25px;
  }
  .slider > span {
    width: 11px;
    padding-top: 3px;
  }
  .track {
    width: 92px;
    padding: 3px 0 0 5px;
  }
  .bar {
    display: block;
    width: 81px;
    height: 6px;
    border: 1px solid #999;
  }
  .track svg {
    margin-left: -5px;
    margin-top: 1px;
  }
  .R {
    background: linear-gradient(90deg, #111, #e00000 90%);
  }
  .G {
    background: linear-gradient(90deg, #111, #004500 25%, #12a54c 65%);
  }
  .B {
    background: linear-gradient(90deg, #111, #0000b5 65%);
  }
  .slider output {
    width: 51px;
    height: 20px;
    padding: 4px;
    border: 1px solid #2b2b2b;
    background: #3d3d3d;
    box-shadow: 0 1px #646464;
  }
  .spectrum {
    display: flex;
    justify-content: flex-end;
    width: 200px;
    height: 17px;
    margin-left: 6px;
    border: 1px solid #666;
    background:
      linear-gradient(#ffffffe0, #fff0 45%, #0000 55%, #000c),
      linear-gradient(90deg, #e00000, #ffc800 17%, #12a54c 33%, #00b5e0 50%, #1b1b98 65%, #e00060 84%, #d00010);
  }
  .spectrum i {
    width: 8px;
    background: linear-gradient(#fff 50%, #111 50%);
  }

  .adjust {
    height: 129px;
  }
  h2 {
    height: 28px;
    margin: 0;
    padding: 8px 0 0 9px;
    color: #fff;
    font-size: 11.500px;
    letter-spacing: -0.150px;
  }
  .adjust-row {
    display: flex;
    justify-content: center;
    gap: 8px;
    height: 27px;
    padding: 3px 23px 0 0;
  }
  .adjust-row :global(svg) {
    overflow: visible;
  }

  .layers {
    display: flex;
    flex: 1;
    flex-direction: column;
    margin-bottom: 0;
  }
  .filter-row,
  .blend-row,
  .lock-row {
    display: flex;
    align-items: center;
    height: 28px;
    padding: 0 4px 1px 4px;
    border-bottom: 1px solid #383838;
    color: #aaa;
  }
  .blend-row,
  .lock-row {
    border-top: 1px solid #606060;
    padding-bottom: 2px;
  }
  .lock-row {
    height: 30px;
    padding-bottom: 4px;
  }
  .layers .select {
    height: 21px;
    background: linear-gradient(#5e5e5e, #585858);
    border-color: #404040;
    padding: 0 4px 1px 6px;
  }
  .layers .kind {
    width: 77px;
    justify-content: flex-start;
  }
  .kind span {
    flex: 1;
    margin-left: 4px;
  }
  .filters {
    display: flex;
    gap: 8px;
    margin-left: 11px;
  }
  .toggle {
    width: 10px;
    height: 17px;
    margin-left: auto;
    border: 1px solid #3c3c3c;
    background: linear-gradient(#6c6c6c 45%, #444 45%);
  }
  .blend {
    width: 111px;
    margin-right: 5px;
  }
  .field-label {
    color: #b5b5b5;
  }
  .percent-field {
    display: flex;
    width: 60px;
    height: 20px;
    margin-left: auto;
    border: 1px solid #404040;
    color: #757575;
  }
  .lock-row .percent-field {
    margin-top: 2px;
  }
  .percent-field span {
    flex: 1;
    padding: 4px 0 0 5px;
    background: #4a4a4a;
  }
  .percent-field b {
    display: flex;
    align-items: center;
    justify-content: center;
    width: 20px;
    border-left: 1px solid #404040;
    background: #5a5a5a;
  }
  .lock-label {
    width: 35px;
    padding-left: 2px;
  }
  .locks {
    display: flex;
    gap: 6.500px;
    padding-top: 2px;
    margin-right: 22px;
  }
  .list {
    display: flex;
    flex: 1;
    background: #464646;
  }
  .layer {
    display: flex;
    width: 216px;
    height: 39px;
    border-bottom: 1px solid #333;
    background: #535353;
  }
  .visibility {
    display: flex;
    align-items: center;
    justify-content: center;
    width: 31px;
    border-right: 1px solid #3a3a3a;
  }
  .layer-main {
    display: flex;
    flex: 1;
    align-items: center;
    padding: 0 14px 0 3px;
    background: #596678;
  }
  .thumb {
    width: 22px;
    height: 32px;
    margin-right: 11px;
    border: 1px solid #111;
    background: #fff;
  }
  em {
    flex: 1;
  }
  .list-scroll {
    width: 15px;
    margin-left: auto;
    background: linear-gradient(90deg, #3a3a3a, #434343 6px);
  }
  footer {
    display: flex;
    align-items: center;
    height: 20px;
    padding: 1px 0 0 27px;
    gap: 11px;
    border-top: 2px solid #333;
  }
  footer :global(svg) {
    overflow: visible;
  }
  .dim {
    opacity: 0.7;
  }
  .fx {
    width: 16px;
    padding-left: 2px;
    color: #8c8c8c;
    font: italic bold 14px/14px "Liberation Serif", serif;
  }

  .taskbar {
    display: flex;
    align-items: center;
    height: 60px;
    background: #101010;
  }
  .start {
    width: 72px;
    padding-left: 24px;
  }
  .search {
    display: flex;
    align-items: center;
    gap: 17px;
    width: 516px;
    height: 60px;
    padding: 0 0 2px 15px;
    border: 2px solid #c0c0c0;
    background: #f3f3f3;
    color: #2b2b2b;
    font-size: 21px;
    letter-spacing: 0.28px;
  }
  .search span {
    padding-top: 4px;
  }
  .cortana {
    width: 95px;
    padding-left: 24px;
  }
  .cortana i {
    display: block;
    width: 24px;
    height: 24px;
    border: 3px solid #fff;
    border-radius: 50%;
  }
  .taskview {
    width: 54px;
  }
  .app {
    display: flex;
    justify-content: flex-start;
    width: 61px;
    height: 60px;
    margin-right: 14px;
    padding: 13px 0 0 13px;
    border-bottom: 3px solid #ff9fa5;
  }
  .app.ps {
    width: 73px;
    margin-right: 8px;
    padding: 12px 0 0 19px;
    background: #464646;
  }
  .ps span {
    width: 34px;
    height: 33px;
    border: 2px solid #82c4ff;
    background: #0b0645;
    color: #82c8ff;
    font: bold 18px/27px "Open Sans", sans-serif;
    letter-spacing: -1px;
    text-align: center;
  }
  .tray {
    display: flex;
    align-items: center;
    justify-content: space-between;
    width: 213px;
    margin-left: auto;
  }
  .clock {
    display: flex;
    flex-direction: column;
    gap: 10px;
    width: 127px;
    padding-top: 1px;
    color: #fff;
    font-size: 17px;
    line-height: 18px;
    text-align: center;
  }
  .notify {
    position: relative;
    width: 62px;
    padding-left: 7px;
  }
  .notify b {
    position: absolute;
    top: 11px;
    left: 18px;
    width: 25px;
    height: 25px;
    border: 1px solid #999;
    border-radius: 50%;
    background: #2c2c2cee;
    color: #fff;
    font-size: 16px;
    line-height: 23px;
    text-align: center;
  }
  .peek {
    width: 7px;
    height: 60px;
    border-left: 1px solid #888;
  }
</style>
